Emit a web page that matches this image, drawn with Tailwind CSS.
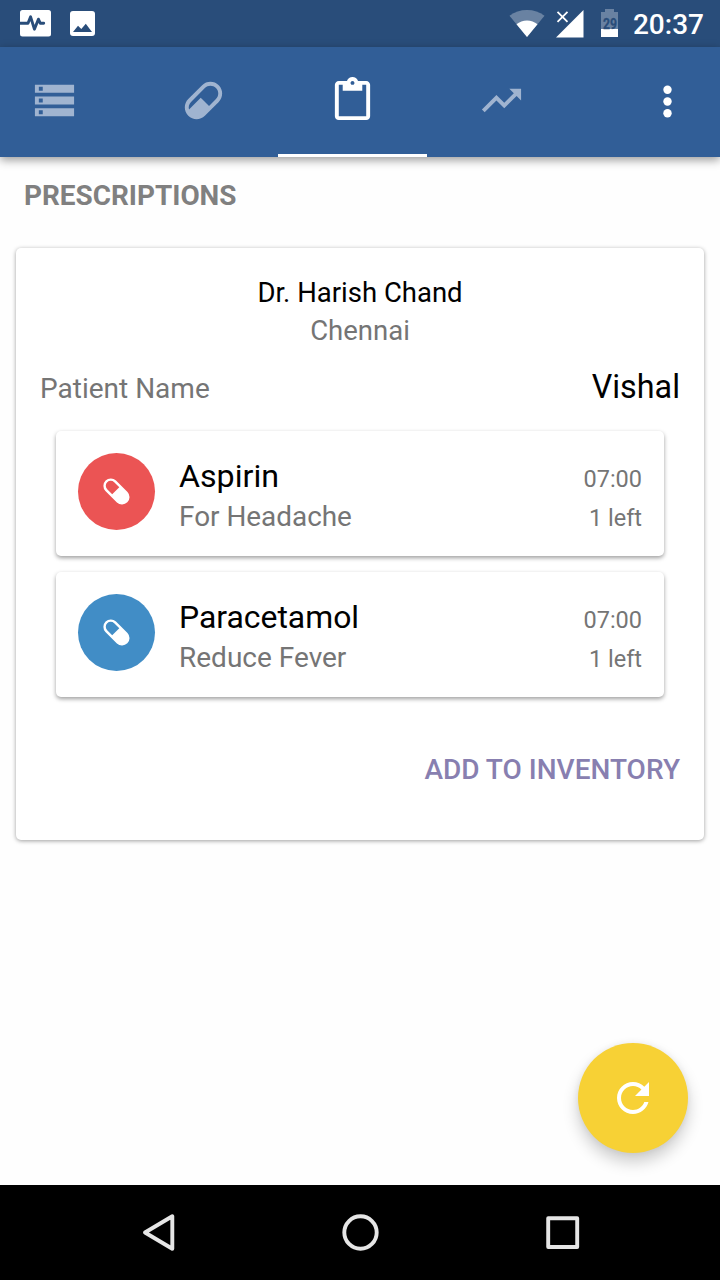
<!DOCTYPE html>
<html lang="en">
<head>
<meta charset="utf-8">
<title>Prescriptions</title>
<script src="https://cdn.jsdelivr.net/npm/@tailwindcss/browser@4"></script>
</head>
<body class="bg-white">
<div class="relative flex h-[1280px] w-[720px] flex-col overflow-hidden bg-[#fefefe] font-['Roboto',sans-serif]">
  <!-- Status bar -->
  <div class="flex h-[47px] shrink-0 items-center justify-between bg-[#294d7a]">
    <svg width="100" height="47" viewBox="0 0 100 47">
      <rect x="20" y="10" width="31" height="26.5" rx="2.5" fill="#fff"/>
      <path d="M20 23.200h8l2.600-6.400 3.800 12.400 4-10 1.800 4h3.500" fill="none" stroke="#294d7a" stroke-width="2.900" stroke-linejoin="round" stroke-linecap="round"/>
      <rect x="70" y="11" width="25" height="25" rx="3" fill="#fff"/>
      <path d="M73 32l5-6.300 3.300 3.400 4.500-5.400L92 32z" fill="#294d7a"/>
    </svg>
    <div class="flex items-center pr-4">
      <svg width="133" height="47" viewBox="500 0 133 47">
        <path d="M527 37L509.500 15.700Q517 10 527 10T544.500 15.700Z" fill="#fff" opacity=".3"/>
        <path d="M527 37L516.500 24.300Q521 20.500 527 20.500T537.500 24.300Z" fill="#fff"/>
        <path d="M556 37.500L583.500 10V37.500Z" fill="#fff"/>
        <path d="M557.500 11.800l10 10M567.500 11.800l-10 10" stroke="#fff" stroke-width="1.800"/>
        <path d="M605 9h9v3h4v17h-17V12h4z" fill="#fff" opacity=".3"/>
        <path d="M601 29h17v8h-17z" fill="#fff"/>
        <text x="603" y="29" font-size="14" font-weight="700" textLength="14" lengthAdjust="spacingAndGlyphs" fill="#294d7a" stroke="#294d7a" stroke-width=".3">29</text>
      </svg>
      <span class="pt-0.5 text-[28px] leading-[47px] font-medium text-white">20:37</span>
    </div>
  </div>

  <!-- Tabs -->
  <div class="relative z-10 flex h-[110px] shrink-0 bg-[#315e97] shadow-[0_3px_9px_rgba(0,0,0,0.4)]">
    <div class="flex w-[129px] pt-[30px] pl-[31px]">
      <svg width="47" height="47" viewBox="0 0 24 24" fill="#a0b4d0"><path d="M2 20h20v-4H2v4zm2-3h2v2H4v-2zM2 4v4h20V4H2zm4 3H4V5h2v2zm-4 7h20v-4H2v4zm2-3h2v2H4v-2z"/></svg>
    </div>
    <div class="flex w-[149px] justify-center pt-[30px]">
      <svg width="47" height="47" viewBox="0 0 24 24" fill="#a0b4d0"><path d="M4.220 11.290L11.290 4.220C13.640 1.880 17.430 1.880 19.780 4.220C22.120 6.560 22.120 10.360 19.780 12.710L12.710 19.780C10.360 22.120 6.560 22.120 4.220 19.780C1.880 17.430 1.880 13.640 4.220 11.290M5.640 12.710C4.590 13.750 4.240 15.240 4.600 16.570L10.590 10.590L14.830 14.830L18.360 11.290C19.930 9.730 19.930 7.200 18.360 5.640C16.800 4.070 14.270 4.070 12.710 5.640L5.640 12.710Z"/></svg>
    </div>
    <div class="flex w-[149px] justify-center border-b-[3px] border-white pt-[30px]">
      <svg width="47" height="47" viewBox="0 0 24 24" fill="#fff"><path d="M19 2h-4.180C14.400.840 13.300 0 12 0c-1.300 0-2.400.840-2.820 2H5c-1.100 0-2 .900-2 2v16c0 1.100.900 2 2 2h14c1.100 0 2-.900 2-2V4c0-1.100-.900-2-2-2zm-7 0c.550 0 1 .450 1 1s-.450 1-1 1-1-.450-1-1 .450-1 1-1zm7 18H5V4h2v3h10V4h2v16z"/></svg>
    </div>
    <div class="flex w-[149px] justify-center pt-[30px]">
      <svg width="47" height="47" viewBox="0 0 24 24" fill="#a0b4d0"><path d="M16 6l2.290 2.290-4.880 4.880-4-4L2 16.590 3.410 18l6-6 4 4 6.300-6.290L22 12V6z"/></svg>
    </div>
    <div class="flex grow justify-end pt-[30px] pr-[29px]">
      <svg width="47" height="47" viewBox="0 0 47 47" fill="#fff"><circle cx="23.500" cy="12.700" r="4.200"/><circle cx="23.500" cy="24.500" r="4.200"/><circle cx="23.500" cy="36.200" r="4.200"/></svg>
    </div>
  </div>

  <!-- Content -->
  <main class="flex grow flex-col px-4">
    <h1 class="mt-[23px] ml-2 text-[27.900px] leading-8 font-bold text-[#808080]">PRESCRIPTIONS</h1>

    <section class="mt-9 flex h-[592px] flex-col rounded-[5px] bg-white px-6 shadow-[0_1px_4px_rgba(0,0,0,0.38)]">
      <div class="mt-[29px] text-center text-[27.500px] leading-8 text-black">Dr. Harish Chand</div>
      <div class="mt-1.5 text-center text-[27.500px] leading-8 text-[#757575]">Chennai</div>
      <div class="mt-5 flex h-10 items-center justify-between">
        <span class="pt-[3px] text-[28px] leading-8 text-[#757575]">Patient Name</span>
        <span class="text-[32.300px] leading-9 text-black">Vishal</span>
      </div>

      <div class="mx-4 mt-6 flex flex-col gap-4">
        <article class="flex h-[125px] items-start rounded-[5px] bg-white px-[22px] pt-[22px] shadow-[0_2px_4px_rgba(0,0,0,0.38)]">
          <div class="flex size-[77px] shrink-0 rounded-full bg-[#eb5454] pt-[25px] pl-[25px]">
            <svg width="27" height="27" viewBox="0 0 27 27"><path fill="#fff" fill-rule="evenodd" d="M2.400 13A7.500 7.500 0 0 1 13 2.400L24.500 13.900A7.500 7.500 0 0 1 13.900 24.500ZM4.200 11.200L9.200 16.300L16.300 9.200L11.200 4.200A4.950 4.950 0 0 0 4.200 11.200Z"/></svg>
          </div>
          <div class="ml-6 grow">
            <div class="mt-1 text-[32.200px] leading-[38px] text-black">Aspirin</div>
            <div class="mt-1.5 text-[27.900px] leading-8 text-[#757575]">For Headache</div>
          </div>
          <div class="text-right text-[23.500px] leading-[39px] text-[#757575]">
            <div class="mt-[7px]">07:00</div>
            <div>1 left</div>
          </div>
        </article>
        <article class="flex h-[125px] items-start rounded-[5px] bg-white px-[22px] pt-[22px] shadow-[0_2px_4px_rgba(0,0,0,0.38)]">
          <div class="flex size-[77px] shrink-0 rounded-full bg-[#418dc6] pt-[25px] pl-[25px]">
            <svg width="27" height="27" viewBox="0 0 27 27"><path fill="#fff" fill-rule="evenodd" d="M2.400 13A7.500 7.500 0 0 1 13 2.400L24.500 13.900A7.500 7.500 0 0 1 13.900 24.500ZM4.200 11.200L9.200 16.300L16.300 9.200L11.200 4.200A4.950 4.950 0 0 0 4.200 11.200Z"/></svg>
          </div>
          <div class="ml-6 grow">
            <div class="mt-1 text-[31.900px] leading-[38px] text-black">Paracetamol</div>
            <div class="mt-1.5 text-[28px] leading-8 text-[#757575]">Reduce Fever</div>
          </div>
          <div class="text-right text-[23.500px] leading-[39px] text-[#757575]">
            <div class="mt-[7px]">07:00</div>
            <div>1 left</div>
          </div>
        </article>
      </div>

      <button class="mt-[57px] self-end text-[28px] leading-8 font-medium text-[#887fb0]">ADD TO INVENTORY</button>
    </section>
  </main>

  <button class="absolute right-8 bottom-[127px] flex size-[110px] items-center justify-center rounded-full bg-[#f7d135] shadow-[0_9px_16px_rgba(0,0,0,0.2),0_0_6px_rgba(0,0,0,0.06)]">
    <svg width="48" height="48" viewBox="0 0 24 24" fill="#fff"><path d="M17.650 6.350C16.200 4.900 14.210 4 12 4c-4.420 0-7.990 3.580-7.990 8s3.570 8 7.990 8c3.730 0 6.840-2.550 7.730-6h-2.080c-.820 2.330-3.040 4-5.650 4-3.310 0-6-2.690-6-6s2.690-6 6-6c1.660 0 3.140.690 4.220 1.780L13 11h7V4l-2.350 2.350z"/></svg>
  </button>

  <!-- Navigation bar -->
  <nav class="flex h-[95px] shrink-0 items-center justify-center bg-black">
    <svg width="480" height="95" viewBox="120 0 480 95" fill="none" stroke="#e6e6e6" stroke-width="3.900" stroke-linejoin="round">
      <path d="M145 47.500L172.300 31.300V63.700Z"/>
      <circle cx="360.500" cy="47.500" r="16.200"/>
      <rect x="548.200" y="33.200" width="29" height="28.800"/>
    </svg>
  </nav>
</div>
</body>
</html>
